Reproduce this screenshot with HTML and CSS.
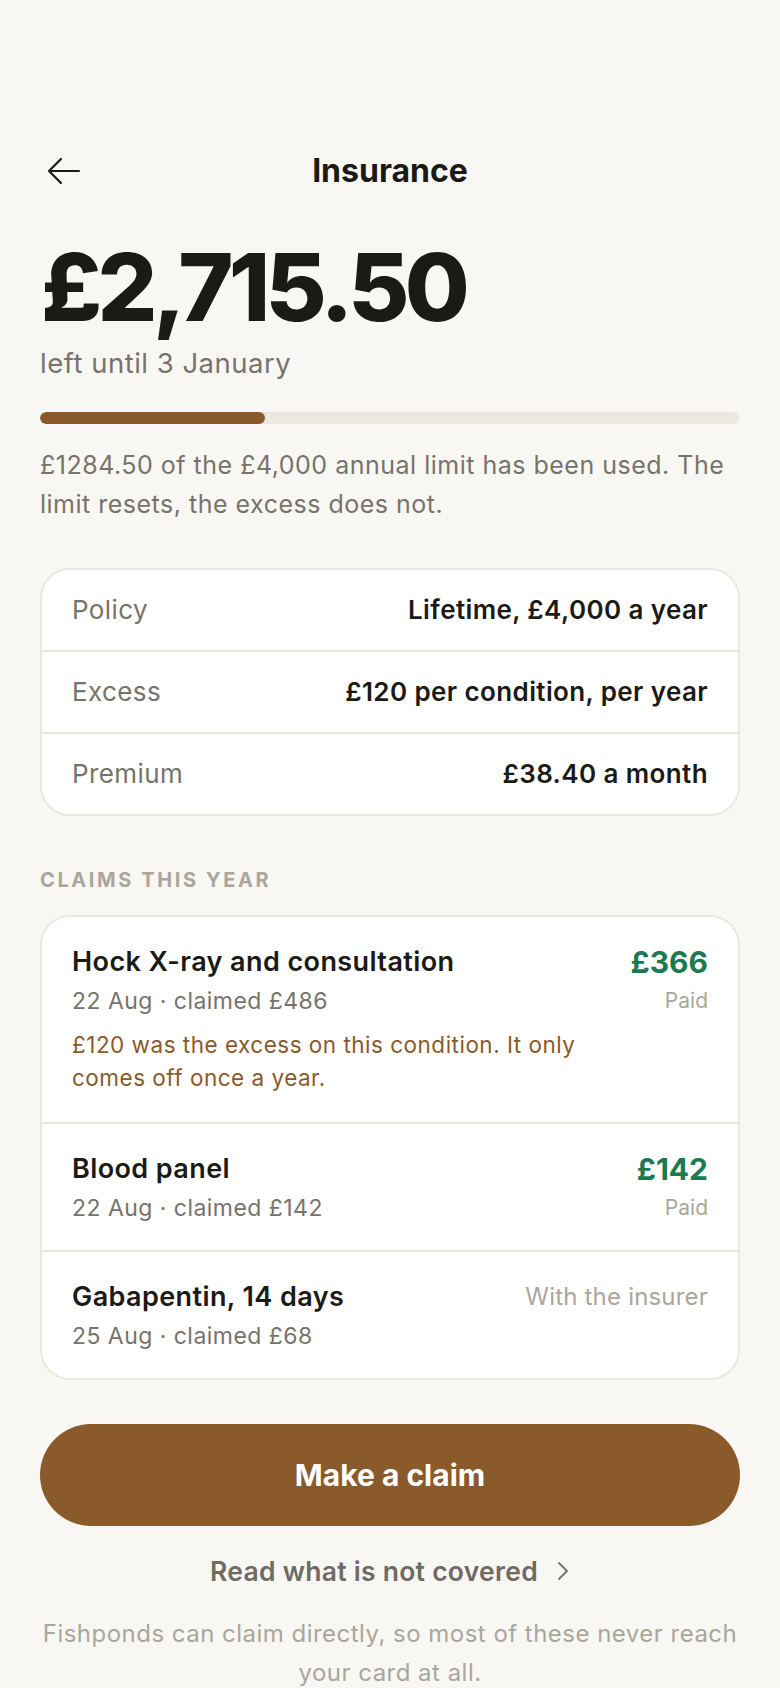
FILE: index.html
```html
<!DOCTYPE html>
<html lang="en">
<head>
<meta charset="utf-8">
<title>Insurance</title>
<link rel="stylesheet" href="styles.css">
</head>
<body>
<main class="page">
  <header class="topbar">
    <button class="back" aria-label="Back">
      <svg width="34" height="28" viewBox="0 0 34 28" fill="none" stroke="#1c1a16" stroke-width="2.2" stroke-linecap="round" stroke-linejoin="round"><path d="M32 14H2M14 2 2 14l12 12"/></svg>
    </button>
    <h1 class="title">Insurance</h1>
    <span></span>
  </header>

  <section class="balance">
    <div class="amount">£2,715.50</div>
    <div class="until">left until 3 January</div>
    <div class="track"><div class="fill" style="width:32.11%"></div></div>
    <p class="note">£1284.50 of the £4,000 annual limit has been used. The limit resets, the excess does not.</p>
  </section>

  <section class="card facts">
    <div class="fact"><span class="label">Policy</span><span class="value">Lifetime, £4,000 a year</span></div>
    <div class="fact"><span class="label">Excess</span><span class="value">£120 per condition, per year</span></div>
    <div class="fact"><span class="label">Premium</span><span class="value">£38.40 a month</span></div>
  </section>

  <h2 class="section-label">CLAIMS THIS YEAR</h2>

  <section class="card claims">
    <div class="claim">
      <div class="claim-main">
        <div class="claim-title">Hock X-ray and consultation</div>
        <div class="claim-sub">22 Aug · claimed £486</div>
        <div class="claim-note">£120 was the excess on this condition. It only comes off once a year.</div>
      </div>
      <div class="claim-side">
        <div class="paid-amount">£366</div>
        <div class="status">Paid</div>
      </div>
    </div>
    <div class="claim">
      <div class="claim-main">
        <div class="claim-title">Blood panel</div>
        <div class="claim-sub">22 Aug · claimed £142</div>
      </div>
      <div class="claim-side">
        <div class="paid-amount">£142</div>
        <div class="status">Paid</div>
      </div>
    </div>
    <div class="claim">
      <div class="claim-main">
        <div class="claim-title">Gabapentin, 14 days</div>
        <div class="claim-sub">25 Aug · claimed £68</div>
      </div>
      <div class="claim-side">
        <div class="pending">With the insurer</div>
      </div>
    </div>
  </section>

  <button class="cta">Make a claim</button>

  <a class="link" href="#">Read what is not covered
    <svg width="14" height="22" viewBox="0 0 14 22" fill="none" stroke="#77736b" stroke-width="1.8" stroke-linecap="round" stroke-linejoin="round"><path d="M3 3l8 8-8 8"/></svg>
  </a>

  <p class="footer">Fishponds can claim directly, so most of these never reach your card at all.</p>
</main>
</body>
</html>
```

FILE: styles.css
```css
* { box-sizing: border-box; }

html, body {
  margin: 0;
  padding: 0;
  background: #f9f7f3;
}

body {
  font-family: Inter, "Noto Sans", "Liberation Sans", sans-serif;
  color: #1c1a16;
}

.page {
  padding: 143px 40px 0;
  display: flex;
  flex-direction: column;
}

.topbar {
  display: grid;
  grid-template-columns: 56px 1fr 56px;
  align-items: center;
  height: 56px;
}

.back {
  border: 0;
  background: none;
  padding: 0 0 0 7px;
  display: flex;
  align-items: center;
  height: 56px;
  cursor: pointer;
}

.title {
  margin: 0;
  text-align: center;
  font-size: 32px;
  line-height: 40px;
  font-weight: 700;
  letter-spacing: 0;
}

.balance {
  display: flex;
  flex-direction: column;
}

.amount {
  margin-top: 40px;
  font-size: 94px;
  line-height: 96px;
  font-weight: 800;
  letter-spacing: -0.05em;
  margin-left: 1px;
}

.until {
  margin-top: 13px;
  font-size: 27.5px;
  line-height: 31px;
  letter-spacing: 0.018em;
  color: #77736b;
}

.track {
  margin-top: 33px;
  height: 12px;
  border-radius: 6px;
  background: #ebe8e0;
  overflow: hidden;
}

.fill {
  height: 100%;
  border-radius: 6px;
  background: #8a5a2b;
}

.note {
  margin: 22px 0 0;
  font-size: 25px;
  line-height: 39px;
  letter-spacing: 0.02em;
  color: #77736b;
}

.card {
  background: #fff;
  border: 2px solid #ebe8e0;
  border-radius: 30px;
  overflow: hidden;
}

.facts {
  margin-top: 44px;
}

.fact {
  display: flex;
  justify-content: space-between;
  align-items: center;
  padding: 24px 30px;
  font-size: 26px;
  line-height: 32px;
  letter-spacing: 0.015em;
}

.fact + .fact {
  border-top: 2px solid #ebe8e0;
}

.label {
  color: #77736b;
}

.value {
  font-weight: 600;
  color: #1c1a16;
}

.section-label {
  margin: 52px 0 0;
  font-size: 20px;
  line-height: 24px;
  font-weight: 700;
  letter-spacing: 0.13em;
  color: #aaa69c;
}

.claims {
  margin-top: 23px;
}

.claim {
  display: flex;
  justify-content: space-between;
  gap: 24px;
  padding: 28px 30px 26px;
}

.claim + .claim {
  border-top: 2px solid #ebe8e0;
}

.claim-main {
  display: flex;
  flex-direction: column;
  flex: 1;
}

.claim-title {
  font-size: 27px;
  line-height: 34px;
  font-weight: 600;
  letter-spacing: 0.015em;
}

.claim-sub {
  margin-top: 6px;
  font-size: 23px;
  line-height: 32px;
  letter-spacing: 0.02em;
  color: #77736b;
}

.claim-note {
  margin-top: 11px;
  margin-bottom: 2px;
  font-size: 22.5px;
  line-height: 33px;
  letter-spacing: 0.022em;
  color: #8a5a2b;
}

.claim-side {
  display: flex;
  flex-direction: column;
  align-items: flex-end;
}

.paid-amount {
  font-size: 30px;
  line-height: 34px;
  font-weight: 700;
  color: #1c7a50;
}

.status {
  margin-top: 6px;
  font-size: 21px;
  line-height: 32px;
  color: #aaa69c;
}

.pending {
  font-size: 24px;
  line-height: 34px;
  letter-spacing: 0.008em;
  color: #aaa69c;
  white-space: nowrap;
}

.cta {
  margin-top: 44px;
  height: 102px;
  border: 0;
  border-radius: 51px;
  background: #8a5a2b;
  color: #fff;
  font-family: inherit;
  font-size: 30px;
  font-weight: 700;
  letter-spacing: 0;
}

.link {
  margin-top: 28px;
  align-self: center;
  display: flex;
  align-items: center;
  gap: 18px;
  font-size: 26.5px;
  line-height: 34px;
  font-weight: 600;
  letter-spacing: 0.01em;
  color: #6f6b63;
  text-decoration: none;
}

.footer {
  margin: 27px 0 0;
  text-align: center;
  font-size: 24px;
  line-height: 38.5px;
  letter-spacing: 0.02em;
  color: #aaa69c;
}
```
